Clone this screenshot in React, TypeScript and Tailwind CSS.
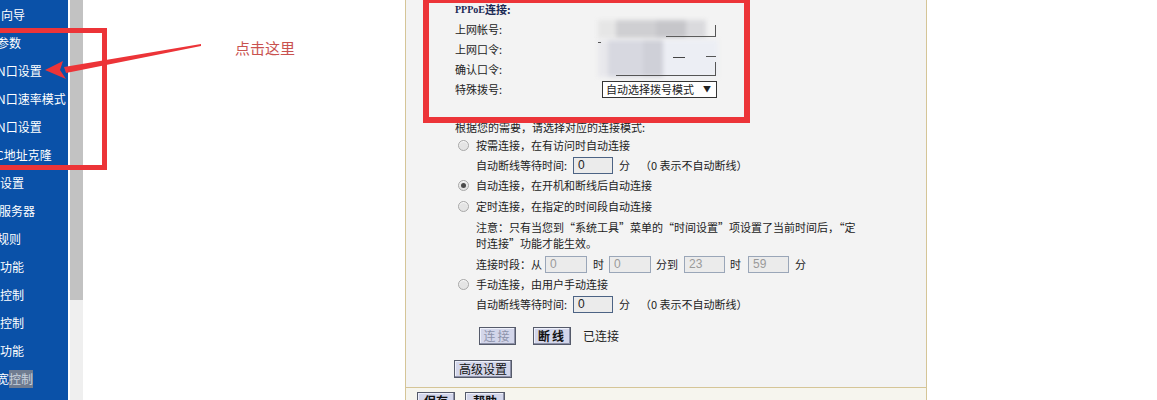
const menu = [
  { label: "向导", cls: "ml-[1px]" },
  { label: "参数", cls: "-ml-[3px]" },
  { label: "N口设置", cls: "-ml-[3px]" },
  { label: "N口速率模式", cls: "-ml-[3px]" },
  { label: "N口设置", cls: "-ml-[3px]" },
  { label: "C地址克隆", cls: "-ml-[4px]" },
  { label: "设置", cls: "ml-0" },
  { label: "服务器", cls: "-ml-[1px]" },
  { label: "规则", cls: "-ml-[3px]" },
  { label: "功能", cls: "ml-0" },
  { label: "控制", cls: "ml-0" },
  { label: "控制", cls: "ml-0" },
  { label: "功能", cls: "ml-0" },
];

const Radio = ({ checked }: { checked?: boolean }) => (
  <span className="flex h-[11px] w-[11px] shrink-0 items-center justify-center rounded-full border border-[#a8a8a8] bg-[#e4e4e4] shadow-[inset_0_1px_1px_rgba(255,255,255,0.9)]">
    {checked && <span className="h-[5px] w-[5px] rounded-full bg-[#4a4a4a]" />}
  </span>
);

const Field = ({ value, disabled, w = "w-[40px]" }: { value: string; disabled?: boolean; w?: string }) => (
  <span
    className={`flex h-[17px] shrink-0 ${w} items-center border bg-[#ebebeb] pl-[4px] text-[12px] ${
      disabled ? "border-[#9aa6b8] text-[#9a9a9a]" : "border-[#4c6384] text-[#222]"
    }`}
    style={{ fontFamily: "'Liberation Sans', Arial, sans-serif" }}
  >
    {value}
  </span>
);

const Btn = ({ children, muted, className = "" }: { children: React.ReactNode; muted?: boolean; className?: string }) => (
  <span
    className={`flex h-[18px] shrink-0 items-center justify-center border border-[#555a6a] bg-[#d3d6ea] shadow-[inset_-1px_-1px_0_#8d91a8,inset_1px_1px_0_#eef0fa] text-[12px] ${
      muted ? "text-[#8d93ab]" : "text-[#111]"
    } ${className}`}
  >
    {children}
  </span>
);

const WaitRow = () => (
  <div className="flex h-[20px] items-center pl-[21px]">
    <span className="w-[97px] shrink-0">自动断线等待时间:</span>
    <Field value="0" />
    <span className="ml-[6px]">分</span>
    <span className="ml-[10px]">（0 表示不自动断线）</span>
  </div>
);

export default function App() {
  return (
    <div
      className="relative flex h-[400px] w-[1157px] overflow-hidden bg-white text-[12px] text-[#222]"
      style={{ fontFamily: "'Noto Sans CJK SC', 'Noto Sans', sans-serif" }}
    >
      {/* sidebar */}
      <div className="flex w-[68px] shrink-0 flex-col overflow-hidden bg-[#0a51a8] pt-[1px] text-[12px] text-white">
        {menu.map((m, i) => (
          <div key={i} className="flex h-[28px] shrink-0 items-center whitespace-nowrap">
            <span className={m.cls}>{m.label}</span>
          </div>
        ))}
        <div className="flex h-[28px] shrink-0 items-center whitespace-nowrap">
          <span className="-ml-[3px]">宽</span>
          <span className="bg-[#6f7c91] text-[#c9d2de]">控制</span>
        </div>
      </div>
      <div className="w-[2px] shrink-0 bg-white" />
      {/* scrollbar */}
      <div className="flex w-[13px] shrink-0 flex-col">
        <div className="h-[300px] bg-[#c2c2c2]" />
        <div className="flex-1 bg-[#efefef]" />
      </div>

      {/* main */}
      <div className="flex flex-1 pl-[322px]">
        <div className="flex w-[522px] flex-col border-x border-[#d5c597] bg-[#f3f3f3] text-[11px] whitespace-nowrap">
          <div className="flex h-[388px] shrink-0 flex-col border-b border-[#d5c597] pl-[49px]">
            <div className="flex h-[19px] items-center font-bold text-[#1c2a55]">
              <span className="text-[10px]" style={{ fontFamily: "'Liberation Serif', serif" }}>PPPoE</span>
              <span>连接:</span>
            </div>
            <div className="flex h-[20px] items-center">
              <span className="w-[143px] shrink-0">上网帐号:</span>
              <span className="relative h-[18px] w-[120px] shrink-0">
                <span className="absolute inset-0 flex blur-[2px]">
                  <span className="h-full w-[18px] bg-[#e6e6e6]" />
                  <span className="h-full w-[40px] bg-[#cfcfd2]" />
                  <span className="h-full w-[30px] bg-[#c6c6ca]" />
                  <span className="h-full w-[20px] bg-[#dadadd]" />
                </span>
                <span className="absolute bottom-[1px] right-[2px] h-[12px] w-[50px] border-b border-r border-[#555]" />
              </span>
            </div>
            <div className="relative flex h-[40px] flex-col">
              <div className="flex h-[20px] items-center">上网口令:</div>
              <div className="flex h-[20px] items-center">确认口令:</div>
              <span className="absolute left-[143px] top-[1px] h-[37px] w-[120px]">
                <span className="absolute inset-0 flex blur-[2px]">
                  <span className="h-full w-[10px] bg-[#e8e8ec]" />
                  <span className="h-full w-[35px] bg-[#d7d8e0]" />
                  <span className="h-full w-[20px] bg-[#cfd0d8]" />
                  <span className="h-full w-[55px] bg-[#eceef4]" />
                </span>
                <span className="absolute left-0 top-[2px] h-[6px] w-[3px] border-t border-[#555]" />
                <span className="absolute right-[2px] top-[16px] h-[1px] w-[10px] bg-[#555]" />
                <span className="absolute left-[75px] top-[17px] h-[1px] w-[12px] bg-[#444]" />
                <span className="absolute bottom-[1px] right-[2px] h-[14px] w-[100px] border-b border-r border-[#555]" />
              </span>
            </div>
            <div className="flex h-[20px] items-center">
              <span className="w-[147px] shrink-0">特殊拨号:</span>
              <span className="flex h-[17px] w-[115px] shrink-0 items-center justify-between border border-[#333] bg-white pl-[3px] pr-[5px] text-[11px]">
                <span>自动选择拨号模式</span>
                <span className="text-[8px]">▼</span>
              </span>
            </div>

            <div className="mt-[20px] flex h-[16px] items-center">根据您的需要，请选择对应的连接模式:</div>

            <div className="flex h-[20px] items-center gap-[7px] pl-[3px]">
              <Radio />
              <span>按需连接，在有访问时自动连接</span>
            </div>
            <WaitRow />
            <div className="flex h-[21px] items-center gap-[7px] pl-[3px]">
              <Radio checked />
              <span>自动连接，在开机和断线后自动连接</span>
            </div>
            <div className="flex h-[20px] items-center gap-[7px] pl-[3px]">
              <Radio />
              <span>定时连接，在指定的时间段自动连接</span>
            </div>
            <div className="mt-[3px] flex flex-col pl-[21px] leading-[16px]">
              <span>注意：只有当您到“系统工具”菜单的“时间设置”项设置了当前时间后，“定</span>
              <span>时连接”功能才能生效。</span>
            </div>
            <div className="mt-[3px] flex h-[20px] items-center pl-[21px]">
              <span className="w-[69px] shrink-0">连接时段：从</span>
              <Field value="0" disabled w="w-[42px]" />
              <span className="ml-[6px] w-[16px] shrink-0">时</span>
              <Field value="0" disabled w="w-[42px]" />
              <span className="ml-[5px] w-[28px] shrink-0">分到</span>
              <Field value="23" disabled w="w-[41px]" />
              <span className="ml-[5px] w-[18px] shrink-0">时</span>
              <Field value="59" disabled w="w-[41px]" />
              <span className="ml-[6px]">分</span>
            </div>
            <div className="flex h-[20px] items-center gap-[7px] pl-[3px]">
              <Radio />
              <span>手动连接，由用户手动连接</span>
            </div>
            <WaitRow />
            <div className="mt-[13px] flex items-center pl-[24px]">
              <Btn muted className="w-[37px] tracking-[2px]">连接</Btn>
              <Btn className="ml-[17px] w-[38px] font-bold tracking-[2px]">断线</Btn>
              <span className="ml-[12px] text-[12px]">已连接</span>
            </div>
            <div className="mt-[15px] flex">
              <Btn className="-ml-[1px] w-[58px]">高级设置</Btn>
            </div>
          </div>
          <div className="flex flex-1 gap-[10px] bg-[#f6f5ee] pl-[11px] pt-[4px]">
            <Btn className="w-[38px] font-bold">保存</Btn>
            <Btn className="w-[40px] font-bold">帮助</Btn>
          </div>
        </div>
      </div>

      {/* annotations */}
      <div className="absolute left-[-10px] top-[28px] h-[142px] w-[117px] border-[5px] border-[#ec3438]" />
      <div className="absolute left-[423px] top-[-3px] h-[126px] w-[327px] border-[6px] border-[#ec3438]" />
      <svg className="absolute left-0 top-0" width="260" height="100" viewBox="0 0 260 100">
        <polygon points="201,44 201,46 66,73 64,67" fill="#ec3438" />
        <polygon points="45,70 63,61 60,70 66,79" fill="#ec3438" />
      </svg>
      <div className="absolute left-[235px] top-[37px] text-[15px] text-[#c9524f]">点击这里</div>
    </div>
  );
}
